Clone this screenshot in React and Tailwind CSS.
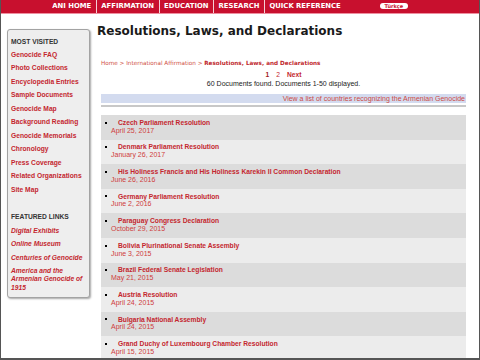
import React from "react";

const navItems = ["ANI HOME", "AFFIRMATION", "EDUCATION", "RESEARCH", "QUICK REFERENCE"];
const mostVisited = [
  "Genocide FAQ",
  "Photo Collections",
  "Encyclopedia Entries",
  "Sample Documents",
  "Genocide Map",
  "Background Reading",
  "Genocide Memorials",
  "Chronology",
  "Press Coverage",
  "Related Organizations",
  "Site Map",
];
const featured = [["Digital Exhibits"], ["Online Museum"], ["Centuries of Genocide"], ["America and the", "Armenian Genocide of", "1915"]];
const docs = [
  ["Czech Parliament Resolution", "April 25, 2017"],
  ["Denmark Parliament Resolution", "January 26, 2017"],
  ["His Holiness Francis and His Holiness Karekin II Common Declaration", "June 26, 2016"],
  ["Germany Parliament Resolution", "June 2, 2016"],
  ["Paraguay Congress Declaration", "October 29, 2015"],
  ["Bolivia Plurinational Senate Assembly", "June 3, 2015"],
  ["Brazil Federal Senate Legislation", "May 21, 2015"],
  ["Austria Resolution", "April 24, 2015"],
  ["Bulgaria National Assembly", "April 24, 2015"],
  ["Grand Duchy of Luxembourg Chamber Resolution", "April 15, 2015"],
];

export default function App() {
  return (
    <div className="w-[480px] h-[360px] overflow-hidden bg-white border-l border-r border-b-2 border-[#555555] flex flex-col">
      <nav className="h-[13.5px] shrink-0 bg-[#c8102e] border-b-[1.5px] border-[#ee8fa0] flex items-stretch pl-[46.8px] font-['DejaVu_Sans',sans-serif] font-bold text-[6.85px] text-white">
        {navItems.map((t, i) => (
          <React.Fragment key={t}>
            {i > 0 && <span className="w-px bg-white/80" />}
            <span className="px-[4.5px] flex items-center whitespace-nowrap">{t}</span>
          </React.Fragment>
        ))}
        <span className="ml-[34.8px] self-center h-[6.4px] px-[4.5px] rounded-full bg-white text-[#c8102e] text-[5px] leading-[6.4px] flex items-center">
          Türkçe
        </span>
      </nav>

      <div className="flex flex-row items-start">
        <aside className="ml-[6px] mt-[15.5px] w-[83px] shrink-0 bg-[#eeeeee] border border-[#a3a3a3] rounded-[3px] shadow-[1px_1px_2px_rgba(0,0,0,0.35)] pt-[7.5px] pb-[5px] pl-[3px] font-['Liberation_Sans',Arial,sans-serif] font-bold text-[6.7px] leading-[8.3px]">
          <div className="text-[#333333]">MOST VISITED</div>
          {mostVisited.map((t) => (
            <div key={t} className="mt-[5.2px] text-[#c4262e] whitespace-nowrap">
              {t}
            </div>
          ))}
          <div className="mt-[19.1px] text-[#333333]">FEATURED LINKS</div>
          {featured.map((lines) => (
            <div key={lines[0]} className="mt-[5.2px] text-[#c4262e] italic whitespace-nowrap">
              {lines.map((l, i) => (
                <div key={i}>{l}</div>
              ))}
            </div>
          ))}
        </aside>

        <main className="ml-[7px] w-[373px] shrink-0 flex flex-col">
          <h1 className="mt-[10.5px] leading-[14px] text-[12px] font-bold text-[#1a1a1a] font-['DejaVu_Sans',sans-serif] whitespace-nowrap">
            Resolutions, Laws, and Declarations
          </h1>
          <div className="px-[4px] flex flex-col">
            <div className="mt-[20.7px] leading-[8px] text-[5.7px] font-['DejaVu_Sans',sans-serif] text-[#cf4f45] whitespace-nowrap">
              Home &gt; International Affirmation &gt; <span className="font-bold text-[#c0282d]">Resolutions, Laws, and Declarations</span>
            </div>
            <div className="mt-[4.3px] leading-[8px] flex justify-center gap-[7px] font-['Liberation_Sans',Arial,sans-serif] text-[6.7px]">
              <span className="font-bold text-[#a31b22]">1</span>
              <span className="text-[#c4262e]">2</span>
              <span className="font-bold text-[#c4262e]">Next</span>
            </div>
            <div className="mt-[1px] leading-[8px] text-center text-[7px] text-[#222222] font-['Liberation_Sans',Arial,sans-serif]">
              60 Documents found. Documents 1-50 displayed.
            </div>
            <div className="mt-[6.3px] h-[9px] bg-[#d3dbef] text-right pr-[1px] text-[7px] leading-[9px] text-[#cc4a45] font-['Liberation_Sans',Arial,sans-serif]">
              View a list of countries recognizing the Armenian Genocide
            </div>
            <div className="mt-[2.2px] h-[1.5px] bg-[#c8c8c8]" />
            <ul className="mt-[8px] flex flex-col font-['Liberation_Sans',Arial,sans-serif]">
              {docs.map(([title, date], i) => (
                <li
                  key={title}
                  className={
                    "h-[24.6px] shrink-0 pt-[3.9px] leading-[7.7px] " +
                    (i % 2 === 0 ? "bg-[#dcdcdc]" : "bg-[#ececec]")
                  }
                >
                  <div className="flex items-center">
                    <span className="ml-[4px] w-[2px] h-[2px] bg-black shrink-0" />
                    <span className="ml-[11px] font-bold text-[6.7px] text-[#c4262e] whitespace-nowrap">{title}</span>
                  </div>
                  <div className="pl-[10px] text-[7px] text-[#cf3c3c] whitespace-nowrap">{date}</div>
                </li>
              ))}
            </ul>
          </div>
        </main>
      </div>
    </div>
  );
}
